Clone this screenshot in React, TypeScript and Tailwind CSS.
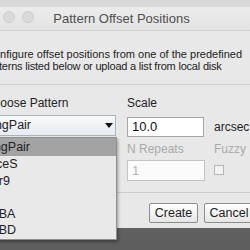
const patterns = ["LongPair", "RaceS", "Star9", "", "SetBA", "SetBD"];

function Dropdown() {
  return (
    <div className="absolute left-[-30px] top-[137px] w-[147px] border border-[#8f8f8f] bg-[#e9e9e9] shadow-[1px_2px_3px_rgba(0,0,0,0.35)]">
      {patterns.map((p, i) => (
        <div
          key={i}
          className={
            "whitespace-nowrap pl-[9px] text-[12.5px] text-[#222] " +
            (i === 0 ? "h-[18px] bg-[#a3a3a3] leading-[18px]" : "h-[16.5px] leading-[16.5px]")
          }
        >
          {p}
        </div>
      ))}
    </div>
  );
}

export default function App() {
  return (
    <div
      className="relative h-[250px] w-[250px] overflow-hidden whitespace-nowrap bg-gradient-to-b from-[#7c7c7c] to-[#5e5e5e]"
      style={{ fontFamily: '"Liberation Sans", Arial, sans-serif' }}
    >
      <div className="h-[7px] bg-[#d9d9d9]" />
      <div className="ml-[-30px] w-[303px] bg-[#e8e8e8]">
        {/* title bar */}
        <div className="relative flex h-[24px] items-center justify-center border-b border-[#cfcfcf] bg-gradient-to-b from-[#ececec] to-[#e3e3e3]">
          <div className="absolute left-[33px] top-[4px] flex gap-[7px]">
            <span className="h-[12px] w-[12px] rounded-full border border-[#cdcdcd] bg-[#dadada]" />
            <span className="h-[12px] w-[12px] rounded-full border border-[#cdcdcd] bg-[#dadada]" />
          </div>
          <span className="text-[13px] text-[#4f4f4f]">Pattern Offset Positions</span>
        </div>

        <div className="pl-[16px] pt-[17px] text-[11px] leading-[12px] text-[#222]">
          <p>Configure offset positions from one of the predefined</p>
          <p className="ml-[-3px] tracking-[-0.2px]">Patterns listed below or upload a list from local disk</p>
        </div>

        <div className="mt-[12px] border-t border-[#cdcdcd]" />

        <div className="flex pl-[15px] pt-[10px]">
          <div className="w-[142px]">
            <div className="h-[17px] text-[12px] leading-[17px] text-[#222]">Choose Pattern</div>
            <div className="ml-[-7px] mt-[3px] flex h-[21px] w-[138px] items-center justify-between border border-[#a9b4c2] bg-gradient-to-b from-[#f7f8fa] to-[#e9ecf0] pl-[2px] pr-[2px] text-[12.5px] text-[#222]">
              <span>LongPair</span>
              <svg width="8" height="5" viewBox="0 0 8 5">
                <path d="M0 0h8L4 5z" fill="#111" />
              </svg>
            </div>
          </div>

          <div className="w-[87px]">
            <div className="h-[17px] text-[12px] leading-[17px] text-[#222]">Scale</div>
            <div className="mt-[5px] flex h-[20px] w-[77px] items-center border border-[#a6a6a6] bg-white pl-[4px] text-[13px] text-[#111]">
              10.0
            </div>
            <div className="mt-[4px] h-[17px] text-[12px] leading-[17px] text-[#aaaaaa]">N Repeats</div>
            <div className="mt-[2px] flex h-[21px] w-[78px] items-center border border-[#c4c4c4] bg-[#fbfbfb] pl-[4px] text-[13px] text-[#b3b3b3]">
              1
            </div>
          </div>

          <div>
            <div className="h-[17px]" />
            <div className="mt-[5px] flex h-[20px] items-center text-[12px] text-[#222]">arcsec</div>
            <div className="mt-[4px] h-[17px] text-[12px] leading-[17px] text-[#aaaaaa]">Fuzzy</div>
            <div className="mt-[7px] h-[10px] w-[10px] border border-[#b5b5b5] bg-[#f3f3f3]" />
          </div>
        </div>

        <div className="mt-[11px] border-t border-[#cdcdcd]" />

        <div className="flex justify-end gap-[6px] pb-[5px] pr-[19px] pt-[10px]">
          <button className="h-[20px] w-[49px] rounded-[2px] border border-[#8d8d8d] bg-gradient-to-b from-white to-[#e6e6e6] text-[12.5px] text-[#222]">
            Create
          </button>
          <button className="h-[20px] w-[50px] rounded-[2px] border border-[#8d8d8d] bg-gradient-to-b from-white to-[#e6e6e6] text-[12.5px] text-[#222]">
            Cancel
          </button>
        </div>
      </div>

      <Dropdown />
    </div>
  );
}
